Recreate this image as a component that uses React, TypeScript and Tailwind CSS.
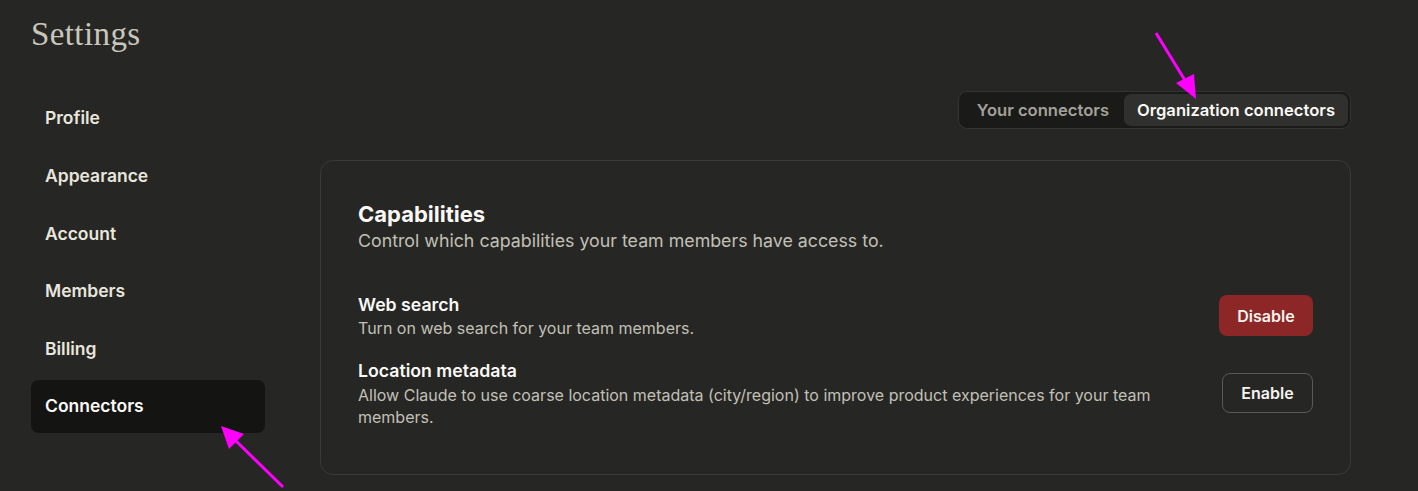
import React from "react";

const navItems = ["Profile", "Appearance", "Account", "Members", "Billing", "Connectors"];

export default function App() {
  return (
    <div
      className="relative w-[1418px] h-[491px] overflow-hidden bg-[#262624] text-[#f5f4ef]"
      style={{ fontFamily: "Inter, 'Noto Sans', sans-serif" }}
    >
      <div className="px-[31px] pt-[13px]">
        <h1
          className="text-[33px] leading-[42px] text-[#c9c6bc] tracking-[0.4px]"
          style={{ fontFamily: "'Liberation Serif', 'DejaVu Serif', serif" }}
        >
          Settings
        </h1>
      </div>
      <div className="flex pl-[31px] pr-[67px] mt-[37px]">
        <nav className="w-[234px] flex flex-col gap-[4.6px]">
          {navItems.map((item) => (
            <div
              key={item}
              className={`h-[53px] flex items-center px-[14px] rounded-[8px] text-[17.5px] font-semibold ${
                item === "Connectors" ? "bg-[#141413] text-[#faf9f5]" : "text-[#e8e6dd]"
              }`}
            >
              {item}
            </div>
          ))}
        </nav>
        <main className="flex-1 ml-[55px] flex flex-col">
          <div className="flex justify-end -mt-[1px]">
            <div className="flex items-center p-[2px] rounded-[9px] bg-[#1a1a19] border border-[#343431]">
              <div className="pl-[16px] pr-[15px] h-[32px] flex items-center text-[16.6px] font-semibold text-[#a3a199]">
                Your connectors
              </div>
              <div className="px-[13px] h-[32px] flex items-center rounded-[7px] bg-[#30302e] text-[16.6px] font-semibold text-[#faf9f5]">
                Organization connectors
              </div>
            </div>
          </div>
          <section className="mt-[31px] rounded-[13px] border border-[#3a3a37] px-[37px] pt-[39px] pb-[46px]">
            <h2 className="text-[22px] leading-[28px] font-bold text-[#faf9f5]">Capabilities</h2>
            <p className="text-[17.8px] leading-[26px] text-[#c2c0b6]">
              Control which capabilities your team members have access to.
            </p>
            <div className="mt-[38px] flex flex-col gap-[19px]">
              <div className="flex items-center justify-between gap-[40px]">
                <div>
                  <div className="text-[17.7px] leading-[25px] font-semibold text-[#faf9f5]">Web search</div>
                  <div className="text-[16px] leading-[22px] text-[#c2c0b6]">Turn on web search for your team members.</div>
                </div>
                <button className="w-[94px] h-[41px] rounded-[8px] bg-[#8d2626] text-[16px] font-semibold text-[#f5f4ef]">
                  Disable
                </button>
              </div>
              <div className="flex items-center justify-between gap-[40px]">
                <div className="max-w-[820px]">
                  <div className="text-[17.7px] leading-[26px] font-semibold text-[#faf9f5]">Location metadata</div>
                  <div className="text-[16px] leading-[22px] text-[#c2c0b6]">
                    Allow Claude to use coarse location metadata (city/region) to improve product experiences for your team members.
                  </div>
                </div>
                <button className="w-[91px] h-[40px] rounded-[8px] border border-[#5a5954] text-[16px] font-semibold text-[#f5f4ef]">
                  Enable
                </button>
              </div>
            </div>
          </section>
        </main>
      </div>

      <svg className="absolute left-0 top-0 pointer-events-none" width="1418" height="491">
        <line x1="1156" y1="33" x2="1186" y2="82" stroke="#ff00ff" strokeWidth="3" />
        <polygon points="1196,99 1176,83 1194,74" fill="#ff00ff" />
        <line x1="283" y1="487" x2="235" y2="440" stroke="#ff00ff" strokeWidth="3" />
        <polygon points="221,426 244,434 229,449" fill="#ff00ff" />
      </svg>
    </div>
  );
}
